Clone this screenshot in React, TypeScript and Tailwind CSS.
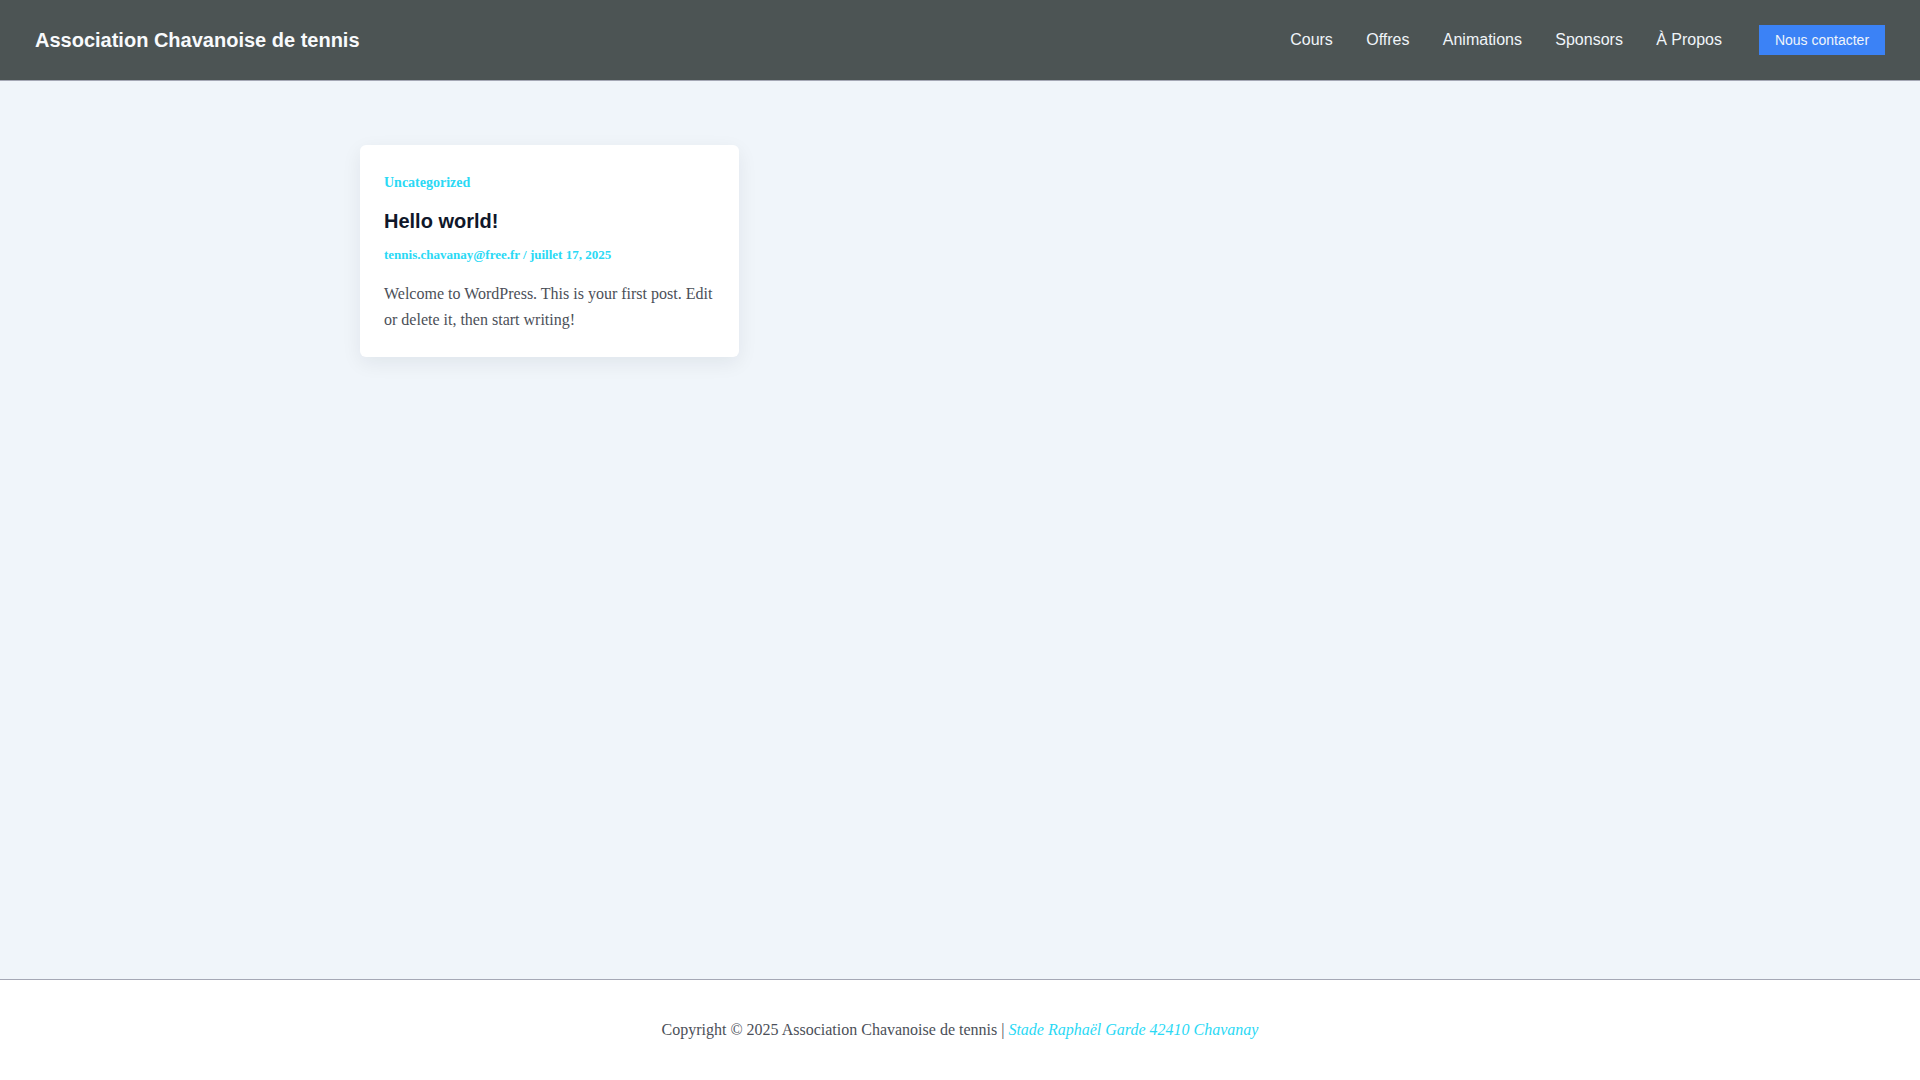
export default function App() {
  const nav = ["Cours", "Offres", "Animations", "Sponsors", "À Propos"];
  return (
    <div className="flex min-h-[1080px] flex-col bg-[#f0f5fa] font-['Liberation_Serif',serif] text-[16px] text-[#4b4f58]">
      <header className="flex h-[81px] items-center justify-between border-b border-[#a5a8b5] bg-[#4c5454] pl-[35px] pr-[35px]">
        <div className="font-['Liberation_Sans',sans-serif] text-[20px] font-semibold text-[#f8fafc]">Association Chavanoise de tennis</div>
        <nav className="flex items-center font-['Liberation_Sans',sans-serif]">
          {nav.map((n) => (
            <a key={n} className="mr-[33.33px] text-[16px] text-[#f0f5fa]">{n}</a>
          ))}
          <a className="ml-[3.67px] flex h-[30px] w-[126px] items-center justify-center bg-[#3b82f6] text-[14px] text-[#f0f5fa]">Nous contacter</a>
        </nav>
      </header>
      <main className="flex-1 pt-[64px]">
        <div className="mx-auto w-[1200px]">
          <article className="w-[379px] rounded-[6px] bg-white px-[24px] pb-[24px] pt-[26px] shadow-[0_6px_20px_0_rgba(16,24,40,0.07)]">
            <div className="text-[14px] font-bold leading-[24px] text-[#2ad9f5]">Uncategorized</div>
            <h2 className="mt-[11px] font-['Liberation_Sans',sans-serif] text-[20px] font-semibold leading-[30px] text-[#0f172a]">Hello world!</h2>
            <div className="mt-[9px] text-[13px] font-bold leading-[20px] text-[#2ad9f5]">tennis.chavanay@free.fr / juillet 17, 2025</div>
            <p className="mt-[16px] leading-[26px]">Welcome to WordPress. This is your first post. Edit or delete it, then start writing!</p>
          </article>
        </div>
      </main>
      <footer className="flex h-[101px] justify-center border-t border-[#a5a8b5] bg-white pt-[38px] leading-[24px]">
        <p>Copyright © 2025 Association Chavanoise de tennis | <em className="text-[#2ad9f5]">Stade Raphaël Garde 42410 Chavanay</em></p>
      </footer>
    </div>
  );
}
